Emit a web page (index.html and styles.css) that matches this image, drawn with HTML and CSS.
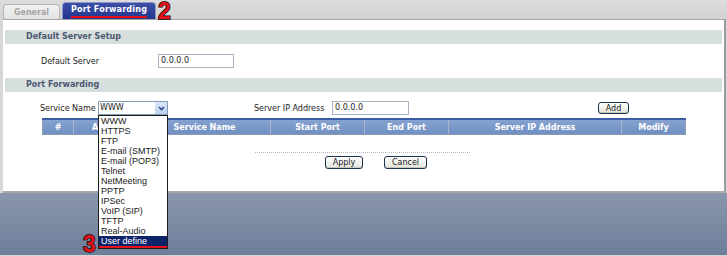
FILE: index.html
```html
<!DOCTYPE html>
<html lang="en">
<head>
    <meta charset="UTF-8">
    <title>Port Forwarding</title>
    <link rel="stylesheet" href="styles.css">
</head>
<body>
    <div class="tabbar">
        <div class="tab">General</div>
        <div class="tab tab-active"><span class="mark">Port Forwarding</span></div>
    </div>
    <div class="panel">
        <div class="section-title">Default Server Setup</div>
        <div class="row row-default">
            <span class="label label-default">Default Server</span>
            <span class="input input-default">0.0.0.0</span>
        </div>
        <div class="section-title">Port Forwarding</div>
        <div class="row row-service">
            <span class="label label-service">Service Name</span>
            <span class="select">
                <span class="select-value">WWW</span>
                <span class="select-btn">
                    <svg width="7" height="5" viewBox="0 0 7 5"><path d="M1 1 L3.5 3.5 L6 1" fill="none" stroke="#2b4a8c" stroke-width="1.6"/></svg>
                </span>
            </span>
            <span class="label label-ip">Server IP Address</span>
            <span class="input input-ip">0.0.0.0</span>
            <span class="btn btn-add">Add</span>
        </div>
        <div class="table-head">
            <span class="col col-num">#</span>
            <span class="col col-active">Active</span>
            <span class="col col-name">Service Name</span>
            <span class="col col-start">Start Port</span>
            <span class="col col-end">End Port</span>
            <span class="col col-ip">Server IP Address</span>
            <span class="col col-mod">Modify</span>
        </div>
        <div class="divider"></div>
        <div class="actions">
            <span class="btn">Apply</span>
            <span class="btn">Cancel</span>
        </div>
    </div>
    <div class="footer"></div>

    <ul class="dropdown">
        <li>WWW</li>
        <li>HTTPS</li>
        <li>FTP</li>
        <li>E-mail (SMTP)</li>
        <li>E-mail (POP3)</li>
        <li>Telnet</li>
        <li>NetMeeting</li>
        <li>PPTP</li>
        <li>IPSec</li>
        <li>VoIP (SIP)</li>
        <li>TFTP</li>
        <li>Real-Audio</li>
        <li class="selected">User define</li>
    </ul>
    <span class="step step-2">2</span>
    <span class="step step-3">3</span>
</body>
</html>
```

FILE: styles.css
```css
body {
    margin: 0;
    width: 727px;
    height: 256px;
    overflow: hidden;
    position: relative;
    background: #d7d7d7;
    font-family: "DejaVu Sans", Verdana, sans-serif;
    font-size: 8px;
    color: #1a1a1a;
}
.tabbar {
    display: flex;
    align-items: flex-end;
    height: 19px;
    padding-left: 3px;
    background: linear-gradient(#dcdcdc, #d2d2d2);
}
.tab {
    height: 15px;
    width: 57px;
    margin-right: 2px;
    display: flex;
    align-items: center;
    justify-content: center;
    font-weight: bold;
    font-size: 8px;
    color: #a4a4a4;
    background: linear-gradient(#f2f2f2, #e2e2e2);
    border: 1px solid #b4b4b4;
    border-bottom: none;
    border-radius: 4px 4px 0 0;
    box-sizing: border-box;
}
.tab-active {
    height: 17px;
    width: 94px;
    color: #fff;
    background: linear-gradient(#3b4ea8, #24358f);
    border-color: #8c96c8;
}
.mark {
    padding-bottom: 1px;
    border-bottom: 2px solid #e8101a;
    line-height: 10px;
    letter-spacing: 0.2px;
}
.step {
    position: absolute;
    font-family: "Liberation Sans", Arial, sans-serif;
    font-weight: bold;
    font-size: 23px;
    line-height: 20px;
    height: 20px;
    color: #e4121a;
    -webkit-text-stroke: 1.4px #000;
    paint-order: stroke fill;
}
.step-2 {
    left: 158px;
    top: 1px;
}
.step-3 {
    left: 83px;
    top: 234px;
}
.panel {
    height: 174px;
    margin: 0 1px 0 3px;
    padding: 10px 2px 0 2px;
    background: #fff;
    border-top: 1px solid #a6a6a6;
    border-right: 2px solid #9c9c9c;
    border-bottom: 2px solid #a8a8a8;
    box-sizing: border-box;
}
.section-title {
    height: 14px;
    line-height: 14px;
    padding-left: 21px;
    background: #d6dfdd;
    font-weight: bold;
    color: #4e5872;
}
.row {
    display: flex;
    align-items: center;
}
.row-default {
    height: 34px;
}
.label-default {
    margin-left: 36px;
    width: 117px;
}
.input {
    height: 14px;
    line-height: 12px;
    padding-left: 2px;
    border: 1px solid #a9b4c2;
    box-sizing: border-box;
}
.input-default {
    width: 76px;
}
.row-service {
    height: 14px;
    margin-top: 9px;
}
.label-service {
    margin-left: 35px;
    width: 58px;
}
.select {
    display: flex;
    width: 70px;
    height: 14px;
    border: 1px solid #7f9db9;
    box-sizing: border-box;
}
.select-value {
    flex: 1;
    padding-left: 1px;
    line-height: 12px;
}
.select-btn {
    width: 12px;
    display: flex;
    align-items: center;
    justify-content: center;
    background: linear-gradient(#dce7f8, #bccfee);
    border-left: 1px solid #fff;
}
.label-ip {
    margin-left: 86px;
    width: 78px;
}
.input-ip {
    width: 77px;
}
.btn {
    display: inline-flex;
    align-items: center;
    justify-content: center;
    height: 12px;
    padding: 0 6px;
    border: 1px solid #1f3250;
    border-radius: 3px;
    background: linear-gradient(#ffffff, #e4e4dc);
    box-shadow: inset 0 -1px 0 #c8c8c0;
    box-sizing: border-box;
    font-size: 8px;
}
.btn-add {
    margin-left: 189px;
    width: 31px;
}
.table-head {
    display: flex;
    margin: 3px 0 0 37px;
    width: 644px;
    height: 17px;
    border-top: 2px solid #3c5ca6;
    background: linear-gradient(#86a2d0, #7090c2);
    border-bottom: 1px solid #8c9ab4;
    box-sizing: border-box;
    color: #fff;
    font-weight: bold;
}
.col {
    display: flex;
    align-items: center;
    justify-content: center;
    border-left: 1px solid #aab6cc;
    box-sizing: border-box;
}
.col-num { width: 31px; border-left: 1px solid #8c9ab4; }
.col-active { width: 65px; }
.col-name { width: 132px; }
.col-start { width: 94px; }
.col-end { width: 84px; }
.col-ip { width: 173px; }
.col-mod { width: 65px; border-right: 1px solid #8c9ab4; }
.divider {
    width: 215px;
    margin: 17px 0 0 250px;
    border-top: 1px dotted #b8b8b8;
}
.actions {
    display: flex;
    gap: 21px;
    margin: 3px 0 0 320px;
}
.actions .btn {
    height: 13px;
    width: 38px;
}
.actions .btn + .btn {
    width: 43px;
}
.footer {
    height: 62px;
    background: repeating-linear-gradient(rgba(255,255,255,0.03) 0 1px, transparent 1px 2px),
        linear-gradient(#8894ac, #6c7c98);
}
.dropdown {
    position: absolute;
    left: 98px;
    top: 115px;
    width: 70px;
    margin: 0;
    padding: 0;
    list-style: none;
    background: #fff;
    border: 1px solid #1c1c1c;
    box-sizing: border-box;
    font-family: "Liberation Sans", Arial, sans-serif;
    font-size: 9px;
}
.dropdown li {
    height: 10px;
    line-height: 10px;
    padding-left: 2px;
}
.dropdown .selected {
    background: #0d246a;
    color: #fff;
    border-bottom: 2px solid #e8101a;
}
```
